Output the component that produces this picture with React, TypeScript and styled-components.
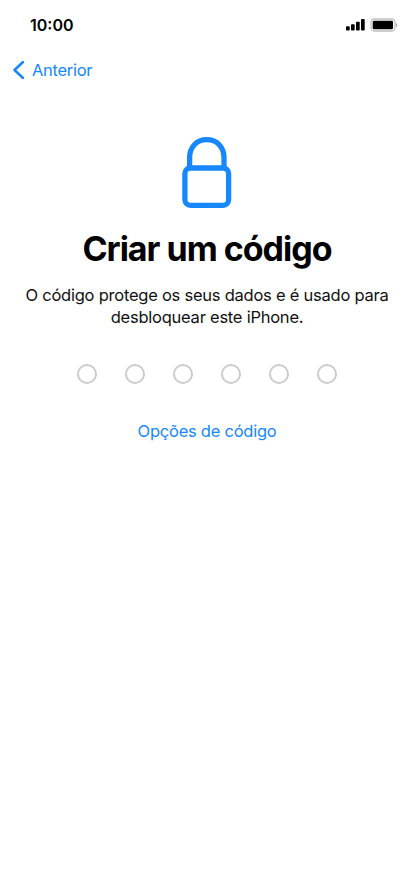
import React from 'react';
import styled, { createGlobalStyle } from 'styled-components';

const Global = createGlobalStyle`
  * { box-sizing: border-box; }
  body { margin: 0; background: #fff; font-family: Inter, "Liberation Sans", sans-serif; }
`;
const Screen = styled.main`
  width: 414px; height: 896px; overflow: hidden; background: #fff; color: #000;
  display: flex; flex-direction: column;
`;
const StatusBar = styled.header`
  height: 50px; display: flex; justify-content: space-between; align-items: center;
  padding: 0 16px 0 30px;
`;
const Time = styled.span`
  font-size: 16px; font-weight: 600; line-height: 20px; letter-spacing: 0;
`;
const StatusIcons = styled.div`display: flex; gap: 5px; align-items: center;`;
const NavBar = styled.nav`height: 40px; display: flex; padding-left: 12px; align-items: center;`;
const BackButton = styled.button`
  display: flex; align-items: center; gap: 7px; border: 0; padding: 0; background: none;
  color: #1688fb; font: 400 16.5px/22px Inter, sans-serif; letter-spacing: -0.3px;
`;
const Content = styled.section`
  display: flex; flex-direction: column; align-items: center; padding-top: 46px; text-align: center;
`;
const Title = styled.h1`
  margin: 18px 0 0; font-size: 34px; line-height: 44px; font-weight: 650; letter-spacing: -1px; white-space: nowrap;
`;
const Description = styled.p`
  margin: 13px 0 0; font-size: 16.5px; line-height: 22px; color: #111;
`;
const Line = styled.span<{ $spacing: number }>`
  display: block; white-space: nowrap; letter-spacing: ${p => p.$spacing}px;
`;
const Dots = styled.div`display: flex; gap: 28px; margin-top: 36px;`;
const Dot = styled.span`width: 20px; height: 20px; border: 2px solid #ccc; border-radius: 50%;`;
const OptionsButton = styled.button`
  margin: 36px 0 0; border: 0; padding: 0; background: none; color: #1688fb;
  font: 400 16.5px/22px Inter, sans-serif; letter-spacing: -0.25px;
`;

export default function App() {
  return (
    <Screen>
      <Global />
      <StatusBar>
        <Time>10:00</Time>
        <StatusIcons>
          <svg width="19" height="12" viewBox="0 0 19 12">
            <rect x="0" y="7.300" width="3.700" height="4.200" rx=".9" />
            <rect x="5" y="5.200" width="3.700" height="6.300" rx=".9" />
            <rect x="10" y="2.700" width="3.700" height="8.800" rx=".9" />
            <rect x="15" y="0" width="3.700" height="11.500" rx=".9" />
          </svg>
          <svg width="28" height="14" viewBox="0 0 28 14">
            <rect x="1" y="1" width="24" height="12" rx="3.500" fill="none" stroke="#bfbfbf" strokeWidth="1.300" />
            <rect x="2.700" y="2.700" width="20.300" height="8.600" rx="1.300" />
            <path d="M26 5v4q1.300-.6 1.300-2T26 5" fill="#aaa" />
          </svg>
        </StatusIcons>
      </StatusBar>
      <NavBar>
        <BackButton>
          <svg width="13" height="20" viewBox="0 0 13 20" fill="none" stroke="#1688fb" strokeWidth="2.5" strokeLinecap="round" strokeLinejoin="round">
            <path d="M11 2 2.500 10l8.500 8" />
          </svg>
          Anterior
        </BackButton>
      </NavBar>
      <Content>
        <svg width="50" height="73" viewBox="0 0 50 73" fill="none" stroke="#1688fb" strokeWidth="5.300">
          <rect x="2.900" y="32" width="43.700" height="37.300" rx="5.500" />
          <path d="M7.600 32V22C7.600 11 14.600 3.700 24.800 3.700S42 11 42 22v10" />
        </svg>
        <Title>Criar um código</Title>
        <Description>
          <Line $spacing={-0.24}>O código protege os seus dados e é usado para</Line>
          <Line $spacing={-0.24}>desbloquear este iPhone.</Line>
        </Description>
        <Dots>{Array.from({ length: 6 }, (_, i) => <Dot key={i} />)}</Dots>
        <OptionsButton>Opções de código</OptionsButton>
      </Content>
    </Screen>
  );
}
